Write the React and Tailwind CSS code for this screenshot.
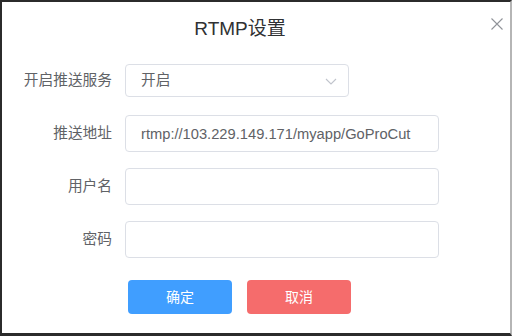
import { useState } from 'react';

const FONT = { fontFamily: '"Liberation Sans", "Noto Sans CJK SC", sans-serif' };

function Row({ label, children }) {
    return (
        <div className="flex items-center h-[37px]">
            <label className="w-[112px] text-right text-[14.7px] text-[#606266]">{label}</label>
            <div className="ml-[13px] flex items-center">{children}</div>
        </div>
    );
}

export default function App(){
    const [url, setUrl] = useState('rtmp://103.229.149.171/myapp/GoProCut');
    const [user, setUser] = useState('');
    const [pwd, setPwd] = useState('');

    return (
        <div style={FONT} className="w-[512px] h-[336px] bg-white border-t-2 border-l-2 border-b-[3px] border-r-2 border-[#2b2b2b] border-r-[#b5b5b5] relative overflow-hidden">
            <div className="h-[54px] flex items-center justify-center">
                <h1 className="text-[19px] text-[#303133] ml-[-32px]">RTMP设置</h1>
            </div>
            <button className="absolute right-[6px] top-[15px] w-[14px] h-[14px] text-[#909399]">
                <svg viewBox="0 0 14 14" width="14" height="14" fill="none" stroke="currentColor" strokeWidth="1.1">
                    <path d="M1.5 1.5L12.5 12.5M12.5 1.5L1.5 12.5" />
                </svg>
            </button>

            <div className="flex flex-col gap-[16px] mt-[6px] ml-[-2px]">
                <Row label="开启推送服务">
                    <div className="w-[224px] h-[33px] border border-[#dcdfe6] rounded-[4px] flex items-center justify-between pl-[15px] pr-[10px] text-[14.7px] text-[#606266]">
                        <span>开启</span>
                        <svg viewBox="0 0 14 14" width="14" height="14" fill="none" stroke="#c0c4cc" strokeWidth="1.1">
                            <path d="M2 5L7 10L12 5" />
                        </svg>
                    </div>
                </Row>
                <Row label="推送地址">
                    <input value={url} onChange={e=>setUrl(e.target.value)} className="w-[314px] h-[37px] border border-[#dcdfe6] rounded-[4px] px-[15px] text-[14.7px] text-[#606266] outline-none" />
                </Row>
                <Row label="用户名">
                    <input value={user} onChange={e=>setUser(e.target.value)} className="w-[314px] h-[37px] border border-[#dcdfe6] rounded-[4px] px-[15px] text-[14.7px] text-[#606266] outline-none" />
                </Row>
                <Row label="密码">
                    <input type="password" value={pwd} onChange={e=>setPwd(e.target.value)} className="w-[314px] h-[37px] border border-[#dcdfe6] rounded-[4px] px-[15px] text-[14.7px] text-[#606266] outline-none" />
                </Row>
            </div>

            <div className="flex gap-[15px] mt-[22px] ml-[126px]">
                <button className="w-[104px] h-[34px] rounded-[4px] bg-[#409eff] text-white text-[14px]">确定</button>
                <button className="w-[104px] h-[34px] rounded-[4px] bg-[#f56c6c] text-white text-[14px]">取消</button>
            </div>
        </div>
    );
}
